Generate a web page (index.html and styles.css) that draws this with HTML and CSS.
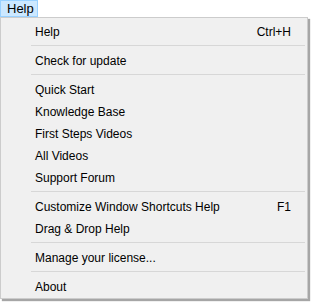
FILE: index.html
```html
<!DOCTYPE html>
<html>
<head>
<meta charset="utf-8">
<link rel="stylesheet" href="styles.css">
</head>
<body>
<div class="menubar"><span class="top-item">Help</span></div>
<div class="menu">
  <div class="item"><span class="label">Help</span><span class="key">Ctrl+H</span></div>
  <div class="sep"></div>
  <div class="item"><span class="label">Check for update</span></div>
  <div class="sep"></div>
  <div class="item"><span class="label">Quick Start</span></div>
  <div class="item"><span class="label">Knowledge Base</span></div>
  <div class="item"><span class="label">First Steps Videos</span></div>
  <div class="item"><span class="label">All Videos</span></div>
  <div class="item"><span class="label">Support Forum</span></div>
  <div class="sep"></div>
  <div class="item"><span class="label">Customize Window Shortcuts Help</span><span class="key">F1</span></div>
  <div class="item"><span class="label">Drag &amp; Drop Help</span></div>
  <div class="sep"></div>
  <div class="item"><span class="label">Manage your license...</span></div>
  <div class="sep"></div>
  <div class="item"><span class="label">About</span></div>
</div>
</body>
</html>
```
FILE: styles.css
```css
html, body {
  margin: 0;
  padding: 0;
  background: #ffffff;
}
body {
  font-family: "Segoe UI", "Liberation Sans", Arial, sans-serif;
  font-size: 12px;
  color: #000;
  width: 311px;
  height: 302px;
  overflow: hidden;
}
.menubar {
  height: 17px;
  display: flex;
}
.top-item {
  box-sizing: border-box;
  width: 38px;
  height: 17px;
  background: #cce8ff;
  border: 1px solid #99d1ff;
  padding-left: 6px;
  line-height: 16px;
  font-size: 13px;
}
.menu {
  box-sizing: border-box;
  width: 308px;
  height: 282px;
  background: #f0f0f0;
  border: 1px solid #cccccc;
  padding: 2px 0 2px 2px;
  box-shadow: 2px 2px 1px rgba(0,0,0,0.35);
}
.item {
  box-sizing: border-box;
  height: 22px;
  display: flex;
  align-items: center;
  padding-top: 2px;
  padding-left: 32px;
  padding-right: 16px;
}
.label {
  flex: 1;
}
.key {
  text-align: right;
}
.sep {
  height: 1px;
  margin: 3px 2px 3px 28px;
  background: #d7d7d7;
}
```
